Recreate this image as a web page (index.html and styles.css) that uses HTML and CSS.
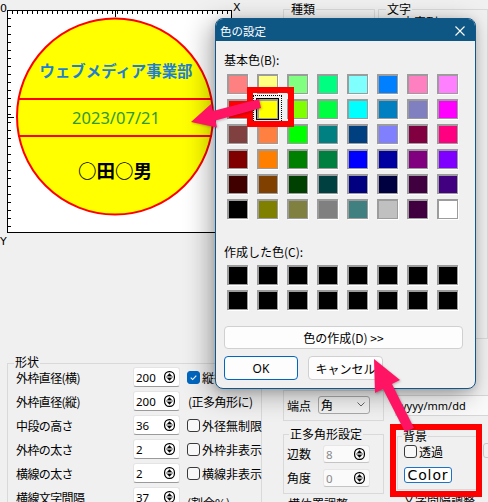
FILE: index.html
```html
<!DOCTYPE html>
<html lang="ja">
<head>
<meta charset="utf-8">
<title>色の設定</title>
<link rel="stylesheet" href="styles.css">
</head>
<body>
<div class="app">
  <div class="top">
    <svg class="canvas" viewBox="0 0 245 250" width="245" height="250">
      <defs>
        <pattern id="tx" x="7" y="0" width="5" height="10" patternUnits="userSpaceOnUse"><rect width="1" height="10" fill="#000"/></pattern>
        <pattern id="ty" x="0" y="10" width="10" height="8" patternUnits="userSpaceOnUse"><rect width="10" height="1" fill="#000"/></pattern>
      </defs>
      <rect x="7.5" y="10.5" width="224" height="222" fill="#fff" stroke="#000"/>
      <rect x="8" y="11" width="223" height="3" fill="url(#tx)"/>
      <rect x="8" y="11" width="3" height="221" fill="url(#ty)"/>
      <rect x="115" y="11" width="1" height="6" fill="#000"/>
      <rect x="8" y="117" width="6" height="1" fill="#000"/>
      <circle cx="115" cy="116.5" r="98" fill="#ffff00" stroke="#ff0000" stroke-width="2"/>
      <line x1="18" y1="99" x2="212" y2="99" stroke="#ff0000" stroke-width="2"/>
      <line x1="18" y1="136" x2="212" y2="136" stroke="#ff0000" stroke-width="2"/>
      <text x="116" y="77" text-anchor="middle" class="c1">ウェブメディア事業部</text>
      <text x="116" y="124" text-anchor="middle" class="c2">2023/07/21</text>
      <text x="115" y="178" text-anchor="middle" class="c3">○田○男</text>
      <text x="0" y="12" class="ax">0</text>
      <text x="233" y="11" class="ax">X</text>
      <text x="0" y="245" class="ax">Y</text>
    </svg>
    <div class="group g-kind"><span class="gt">種類</span></div>
    <div class="group g-text"><span class="gt">文字</span><div class="sub">文字列</div></div>
  </div>

  <div class="bottom">
    <div class="group g-shape">
      <span class="gt gt-shape">形状</span>
      <div class="rows">
        <span class="lbl">外枠直径(横)</span>
        <div class="num"><span>200</span><svg class="spin" viewBox="0 0 11 12"><rect x="0.6" y="0.6" width="9.8" height="10.8" rx="4.6" fill="none" stroke="#000" stroke-width="1.2"/><path d="M5.5 2.3 L8 5 L3 5 Z M3 7 L8 7 L5.5 9.7 Z" fill="#000"/><path d="M2.2 6 H8.8" stroke="#000" stroke-width="0.8"/></svg></div>
        <div class="chk"><span class="cb on"><svg viewBox="0 0 13 13"><path d="M3.2 6.6 L5.5 8.9 L9.8 4.2" stroke="#fff" stroke-width="1.3" fill="none"/></svg></span><span>縦径</span></div>

        <span class="lbl">外枠直径(縦)</span>
        <div class="num"><span>200</span><svg class="spin" viewBox="0 0 11 12"><rect x="0.6" y="0.6" width="9.8" height="10.8" rx="4.6" fill="none" stroke="#000" stroke-width="1.2"/><path d="M5.5 2.3 L8 5 L3 5 Z M3 7 L8 7 L5.5 9.7 Z" fill="#000"/><path d="M2.2 6 H8.8" stroke="#000" stroke-width="0.8"/></svg></div>
        <span class="note">(正多角形に)</span>

        <span class="lbl">中段の高さ</span>
        <div class="num"><span>36</span><svg class="spin" viewBox="0 0 11 12"><rect x="0.6" y="0.6" width="9.8" height="10.8" rx="4.6" fill="none" stroke="#000" stroke-width="1.2"/><path d="M5.5 2.3 L8 5 L3 5 Z M3 7 L8 7 L5.5 9.7 Z" fill="#000"/><path d="M2.2 6 H8.8" stroke="#000" stroke-width="0.8"/></svg></div>
        <div class="chk"><span class="cb"></span><span>外径無制限</span></div>

        <span class="lbl">外枠の太さ</span>
        <div class="num"><span>2</span><svg class="spin" viewBox="0 0 11 12"><rect x="0.6" y="0.6" width="9.8" height="10.8" rx="4.6" fill="none" stroke="#000" stroke-width="1.2"/><path d="M5.5 2.3 L8 5 L3 5 Z M3 7 L8 7 L5.5 9.7 Z" fill="#000"/><path d="M2.2 6 H8.8" stroke="#000" stroke-width="0.8"/></svg></div>
        <div class="chk"><span class="cb"></span><span>外枠非表示</span></div>

        <span class="lbl">横線の太さ</span>
        <div class="num"><span>2</span><svg class="spin" viewBox="0 0 11 12"><rect x="0.6" y="0.6" width="9.8" height="10.8" rx="4.6" fill="none" stroke="#000" stroke-width="1.2"/><path d="M5.5 2.3 L8 5 L3 5 Z M3 7 L8 7 L5.5 9.7 Z" fill="#000"/><path d="M2.2 6 H8.8" stroke="#000" stroke-width="0.8"/></svg></div>
        <div class="chk"><span class="cb"></span><span>横線非表示</span></div>

        <span class="lbl">横線文字間隔</span>
        <div class="num"><span>37</span><svg class="spin" viewBox="0 0 11 12"><rect x="0.6" y="0.6" width="9.8" height="10.8" rx="4.6" fill="none" stroke="#000" stroke-width="1.2"/><path d="M5.5 2.3 L8 5 L3 5 Z M3 7 L8 7 L5.5 9.7 Z" fill="#000"/><path d="M2.2 6 H8.8" stroke="#000" stroke-width="0.8"/></svg></div>
        <span class="pct">(割合%)</span>
      </div>
    </div>

    <div class="mid">
      <div class="group g-end">
        <span class="lbl2">端点</span>
        <div class="combo"><span>角</span><svg class="chev" viewBox="0 0 8 5"><path d="M0.5 0.5 L4 4 L7.5 0.5" fill="none" stroke="#555" stroke-width="0.9"/></svg></div>
      </div>
      <div class="group g-poly">
        <span class="gt gt-poly">正多角形設定</span>
        <div class="prows">
          <span class="lbl2">辺数</span>
          <div class="num small dis"><span>8</span><svg class="spin" viewBox="0 0 11 12"><rect x="0.6" y="0.6" width="9.8" height="10.8" rx="4.6" fill="none" stroke="#000" stroke-width="1.2"/><path d="M5.5 2.3 L8 5 L3 5 Z M3 7 L8 7 L5.5 9.7 Z" fill="#000"/><path d="M2.2 6 H8.8" stroke="#000" stroke-width="0.8"/></svg></div>
          <span class="lbl2">角度</span>
          <div class="num small dis"><span>0</span><svg class="spin" viewBox="0 0 11 12"><rect x="0.6" y="0.6" width="9.8" height="10.8" rx="4.6" fill="none" stroke="#000" stroke-width="1.2"/><path d="M5.5 2.3 L8 5 L3 5 Z M3 7 L8 7 L5.5 9.7 Z" fill="#000"/><path d="M2.2 6 H8.8" stroke="#000" stroke-width="0.8"/></svg></div>
        </div>
      </div>
      <div class="cut">横位置調整</div>
    </div>

    <div class="right">
      <div class="field">yyyy/mm/dd</div>
      <div class="bgrow">
        <div class="group g-bg">
          <span class="gt gt-bg">背景</span>
          <div class="chk bgchk"><span class="cb"></span><span>透過</span></div>
          <button class="colorbtn">Color</button>
        </div>
        <div class="stub"></div>
      </div>
      <div class="cut cut2">文字間隔調整</div>
    </div>
  </div>

  <div class="dialog">
    <div class="titlebar">
      <span class="ttl">色の設定</span>
      <svg class="close" viewBox="0 0 10 10"><path d="M0.5 0.5 L9.5 9.5 M9.5 0.5 L0.5 9.5" stroke="#fff" stroke-width="1.1"/></svg>
    </div>
    <div class="dbody">
      <div class="dlabel">基本色(B):</div>
      <div class="swatches">
        <span class="sw" style="background:#ff8080"></span><span class="sw" style="background:#ffff80"></span><span class="sw" style="background:#80ff80"></span><span class="sw" style="background:#00ff80"></span><span class="sw" style="background:#80ffff"></span><span class="sw" style="background:#0080ff"></span><span class="sw" style="background:#ff80c0"></span><span class="sw" style="background:#ff80ff"></span>
        <span class="sw" style="background:#ff0000"></span><span class="sw sel" style="background:#ffff00"></span><span class="sw" style="background:#80ff00"></span><span class="sw" style="background:#00ff40"></span><span class="sw" style="background:#00ffff"></span><span class="sw" style="background:#0080c0"></span><span class="sw" style="background:#8080c0"></span><span class="sw" style="background:#ff00ff"></span>
        <span class="sw" style="background:#804040"></span><span class="sw" style="background:#ff8040"></span><span class="sw" style="background:#00ff00"></span><span class="sw" style="background:#008080"></span><span class="sw" style="background:#004080"></span><span class="sw" style="background:#8080ff"></span><span class="sw" style="background:#800040"></span><span class="sw" style="background:#ff0080"></span>
        <span class="sw" style="background:#800000"></span><span class="sw" style="background:#ff8000"></span><span class="sw" style="background:#008000"></span><span class="sw" style="background:#008040"></span><span class="sw" style="background:#0000ff"></span><span class="sw" style="background:#0000a0"></span><span class="sw" style="background:#800080"></span><span class="sw" style="background:#8000ff"></span>
        <span class="sw" style="background:#400000"></span><span class="sw" style="background:#804000"></span><span class="sw" style="background:#004000"></span><span class="sw" style="background:#004040"></span><span class="sw" style="background:#000080"></span><span class="sw" style="background:#000040"></span><span class="sw" style="background:#400040"></span><span class="sw" style="background:#400080"></span>
        <span class="sw" style="background:#000000"></span><span class="sw" style="background:#808000"></span><span class="sw" style="background:#808040"></span><span class="sw" style="background:#808080"></span><span class="sw" style="background:#408080"></span><span class="sw" style="background:#c0c0c0"></span><span class="sw" style="background:#400040"></span><span class="sw" style="background:#ffffff"></span>
      </div>
      <div class="dlabel l2">作成した色(C):</div>
      <div class="swatches custom">
        <span class="sw"></span><span class="sw"></span><span class="sw"></span><span class="sw"></span><span class="sw"></span><span class="sw"></span><span class="sw"></span><span class="sw"></span>
        <span class="sw"></span><span class="sw"></span><span class="sw"></span><span class="sw"></span><span class="sw"></span><span class="sw"></span><span class="sw"></span><span class="sw"></span>
      </div>
      <button class="btn wide">色の作成(D) &gt;&gt;</button>
      <div class="btnrow">
        <button class="btn ok">OK</button>
        <button class="btn cancel">キャンセル</button>
      </div>
    </div>
  </div>

  <svg class="annot" viewBox="0 0 488 502" width="488" height="502">
    <rect x="250" y="90" width="41" height="34" fill="none" stroke="#ff0000" stroke-width="6"/>
    <rect x="393" y="427" width="86" height="67" fill="none" stroke="#ff0000" stroke-width="6"/>
    <polygon class="arrow" points="191,122 211,104 213,111 259,99 261,108 215.5,120.6 217,127.5"/>
    <polygon class="arrow" points="374,359 400,380 392,384 414,428 405,432 383,389 375,393"/>
  </svg>
</div>
</body>
</html>
```

FILE: styles.css
```css
html, body {
  margin: 0;
  padding: 0;
  background: #f0f0f0;
}

.app {
  position: relative;
  width: 488px;
  height: 502px;
  overflow: hidden;
  background: #f0f0f0;
  font-family: "Noto Sans CJK JP", "Noto Sans", sans-serif;
  font-size: 12px;
  color: #000;
}

/* ---------- top area ---------- */
.top {
  display: flex;
  height: 355px;
}

.canvas {
  display: block;
  flex: none;
  width: 245px;
  height: 250px;
  margin-right: -5px;
}

.c1 {
  font-family: "Noto Sans CJK JP", sans-serif;
  font-weight: 700;
  font-size: 15.4px;
  fill: #1f7fd0;
}

.c2 {
  font-family: "Noto Sans", "Noto Sans CJK JP", sans-serif;
  font-size: 16.5px;
  fill: #2e9a2e;
}

.c3 {
  font-family: "Noto Sans CJK JP", sans-serif;
  font-weight: 700;
  font-size: 18.5px;
  fill: #000;
}

.ax {
  font-family: "DejaVu Sans", sans-serif;
  font-size: 11px;
  fill: #000;
}

.group {
  box-sizing: border-box;
  border: 1px solid #d9d9d9;
}

.gt {
  display: block;
  width: max-content;
  background: #f0f0f0;
  line-height: 14px;
  padding: 0 1px;
}

.g-kind {
  margin: 9px 0 0 43px;
  width: 108px;
  height: 330px;
}

.g-kind .gt {
  margin: -8px 0 0 6px;
}

.g-text {
  margin: 9px 0 0 3px;
  width: 110px;
  height: 330px;
  flex: none;
}

.g-text .gt {
  margin: -8px 0 0 7px;
}

.g-text .sub {
  margin: -1px 0 0 23px;
  line-height: 14px;
}

/* ---------- bottom area ---------- */
.bottom {
  display: flex;
  align-items: flex-start;
  height: 147px;
}

.g-shape {
  margin: 8px 0 0 7px;
  width: 255px;
  height: 170px;
  padding-left: 8px;
  flex: none;
}

.gt-shape {
  margin: -9px 0 -2px -2px;
}

.rows {
  display: grid;
  grid-template-columns: 110px 47px 1fr;
  grid-auto-rows: 20px;
  column-gap: 7px;
  row-gap: 4px;
  align-items: center;
}

.lbl {
  font-size: 12px;
  letter-spacing: -0.6px;
  white-space: nowrap;
}

.num {
  box-sizing: border-box;
  height: 20px;
  display: flex;
  align-items: center;
  justify-content: space-between;
  background: #fff;
  border: 1px solid #e4e4e4;
  border-bottom-color: #9a9a9a;
  border-radius: 3px;
  padding: 0 4px 0 2px;
  font-family: "Noto Sans", sans-serif;
  font-size: 11.5px;
}

.spin {
  width: 11px;
  height: 12px;
  display: block;
}

.chk {
  display: flex;
  align-items: center;
  gap: 2px;
  white-space: nowrap;
}

.cb {
  box-sizing: border-box;
  width: 13px;
  height: 13px;
  border: 1px solid #3a3a3a;
  border-radius: 3px;
  background: #f8f8f8;
  flex: none;
  display: block;
}

.cb.on {
  background: #0067c0;
  border-color: #0067c0;
}

.cb svg {
  display: block;
  width: 11px;
  height: 11px;
}

.note {
  padding-left: 1px;
  white-space: nowrap;
  letter-spacing: -0.5px;
}

.pct {
  white-space: nowrap;
  margin-top: 10px;
}

/* middle column */
.mid {
  margin-left: 21px;
  width: 101px;
  flex: none;
  display: flex;
  flex-direction: column;
}

.lbl2 {
  line-height: 14px;
  white-space: nowrap;
}

.g-end {
  margin-top: 35px;
  height: 31px;
  display: flex;
  align-items: center;
  gap: 7px;
  padding-left: 3px;
}

.combo {
  box-sizing: border-box;
  width: 52px;
  height: 18px;
  border: 1px solid #a8a8a8;
  border-radius: 3px;
  background: #f3f3f3;
  display: flex;
  align-items: center;
  justify-content: space-between;
  padding: 0 4px 0 2px;
  margin-top: -2px;
}

.chev {
  width: 8px;
  height: 5px;
  display: block;
}

.g-poly {
  margin-top: 13px;
  height: 60px;
  padding-left: 3px;
}

.gt-poly {
  margin: -8px 0 0 2px;
}

.prows {
  display: grid;
  grid-template-columns: 24px 47px;
  grid-auto-rows: 18px;
  column-gap: 12px;
  row-gap: 6px;
  align-items: center;
  margin-top: 4px;
}

.num.small {
  height: 18px;
}

.num.dis {
  color: #8a8a8a;
  background: #fafafa;
  border-color: #e6e6e6;
  border-bottom-color: #c4c4c4;
}

.cut {
  margin: 3px 0 0 5px;
  line-height: 14px;
  white-space: nowrap;
}

/* right column */
.right {
  margin-left: 11px;
  flex: 1;
  min-width: 0;
}

.field {
  box-sizing: border-box;
  margin-top: 40px;
  height: 21px;
  width: 110px;
  border: 1px solid #d6d6d6;
  background: #f9f9f9;
  padding-left: 5px;
  display: flex;
  align-items: center;
  font-family: "Noto Sans", sans-serif;
  font-size: 11px;
}

.bgrow {
  display: flex;
  align-items: flex-start;
  margin-top: 20px;
}

.g-bg {
  margin-left: 2px;
  width: 80px;
  height: 54px;
  padding-left: 6px;
  flex: none;
}

.gt-bg {
  margin: -8px 0 0 -2px;
}

.bgchk {
  margin-top: 2px;
  height: 13px;
}

.colorbtn {
  display: block;
  box-sizing: border-box;
  margin-top: 9px;
  width: 48px;
  height: 16px;
  padding: 0;
  border: 1px solid #1a73c8;
  border-radius: 3px;
  background: #fff;
  font-family: "DejaVu Sans", sans-serif;
  font-size: 14px;
  line-height: 14px;
  letter-spacing: 0.9px;
  color: #000;
}

.stub {
  margin: 7px 0 0 6px;
  box-sizing: border-box;
  width: 12px;
  height: 15px;
  border: 1px solid #c8c8c8;
  border-radius: 3px;
  flex: none;
}

.cut2 {
  margin: 3px 0 0 8px;
}

/* ---------- dialog ---------- */
.dialog {
  position: absolute;
  left: 215px;
  top: 18px;
  width: 261px;
  height: 371px;
  box-sizing: border-box;
  border: 1px solid #11578a;
  border-radius: 8px;
  overflow: hidden;
  background: #f0f0f0;
  box-shadow: -6px 6px 26px rgba(0, 0, 0, 0.32), 0 2px 8px rgba(0, 0, 0, 0.15);
}

.titlebar {
  height: 22px;
  background: #0e5684;
  display: flex;
  align-items: center;
  justify-content: space-between;
  padding: 2px 10px 0 4px;
  box-sizing: border-box;
}

.ttl {
  color: #fff;
  font-size: 11.5px;
  line-height: 14px;
}

.close {
  width: 10px;
  height: 10px;
  display: block;
}

.dbody {
  padding: 12px 0 0 8px;
}

.dlabel {
  line-height: 14px;
  white-space: nowrap;
}

.swatches {
  display: grid;
  grid-template-columns: repeat(8, 21px);
  grid-auto-rows: 20px;
  column-gap: 9px;
  row-gap: 5px;
  margin: 7px 0 0 3px;
}

.sw {
  position: relative;
  display: block;
  box-sizing: border-box;
  border: 1px solid #9c9c9c;
  border-top-width: 2px;
  border-left-width: 2px;
  box-shadow: 1px 1px 0 #ffffff;
}

.sw.sel {
  outline: 1px solid #000;
  outline-offset: 0;
}

.sw.sel::after {
  content: "";
  position: absolute;
  left: -6px;
  top: -6px;
  right: -5px;
  bottom: -5px;
  border: 1px dotted #000;
}

.l2 {
  margin-top: 26px;
}

.swatches.custom {
  margin-top: 6px;
}

.custom .sw {
  background: #000;
}

.btn {
  display: block;
  box-sizing: border-box;
  margin: 0;
  padding: 0;
  background: #fdfdfd;
  border: 1px solid #d0d0d0;
  border-radius: 4px;
  font-family: "Noto Sans CJK JP", "Noto Sans", sans-serif;
  font-size: 12px;
  color: #000;
}

.wide {
  margin-top: 16px;
  width: 239px;
  height: 23px;
}

.btnrow {
  display: flex;
  gap: 10px;
  margin-top: 7px;
}

.ok {
  width: 74px;
  height: 24px;
  border-color: #0067c0;
  font-family: "Noto Sans", sans-serif;
}

.cancel {
  width: 75px;
  height: 24px;
}

/* ---------- annotations ---------- */
.annot {
  position: absolute;
  left: 0;
  top: 0;
  pointer-events: none;
}

.arrow {
  fill: #ff1464;
  filter: drop-shadow(1px 1px 1px rgba(0, 0, 0, 0.25));
}
```
